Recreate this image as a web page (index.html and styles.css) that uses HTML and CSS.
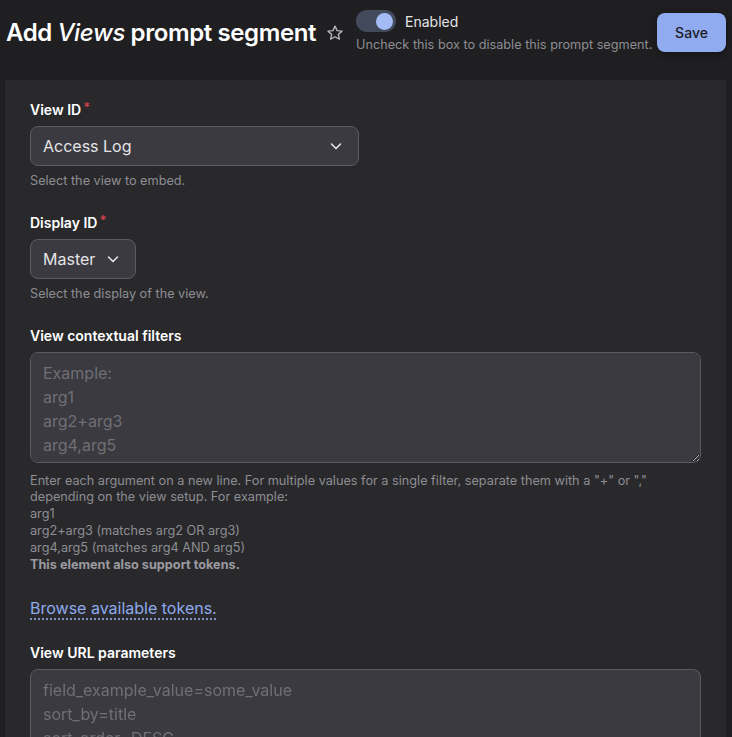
FILE: index.html
```html
<!DOCTYPE html>
<html lang="en">
<head>
  <meta charset="UTF-8">
  <meta name="viewport" content="width=device-width, initial-scale=1.0">
  <title>Add Views prompt segment</title>
  <link rel="stylesheet" href="styles.css">
</head>
<body>
  <div class="page-header">
    <h1 class="page-title">Add <em>Views</em> prompt segment</h1>
    <span class="star" title="Add to shortcuts">
      <svg width="18" height="18" viewBox="0 0 24 24" fill="none" stroke="#b8b8bc" stroke-width="1.8" stroke-linejoin="round">
        <path d="M12 2.8l2.8 6 6.5.7-4.9 4.4 1.4 6.4L12 17l-5.8 3.3 1.4-6.4-4.9-4.4 6.5-.7z"/>
      </svg>
    </span>
    <div class="status">
      <label class="toggle">
        <span class="switch"><span class="knob"></span></span>
        <span class="toggle-label">Enabled</span>
      </label>
      <div class="status-desc">Uncheck this box to disable this prompt segment.</div>
    </div>
    <button class="save">Save</button>
  </div>

  <div class="panel">
    <div class="field">
      <label class="field-label">View ID<span class="req">*</span></label>
      <div class="select wide">
        <span>Access Log</span>
        <svg class="chev" width="14" height="14" viewBox="0 0 14 14" fill="none" stroke="#e4e4e7" stroke-width="1.6" stroke-linecap="round" stroke-linejoin="round"><path d="M2.5 5l4.5 4.5L11.5 5"/></svg>
      </div>
      <div class="desc">Select the view to embed.</div>
    </div>

    <div class="field">
      <label class="field-label">Display ID<span class="req">*</span></label>
      <div class="select">
        <span>Master</span>
        <svg class="chev" width="14" height="14" viewBox="0 0 14 14" fill="none" stroke="#e4e4e7" stroke-width="1.6" stroke-linecap="round" stroke-linejoin="round"><path d="M2.5 5l4.5 4.5L11.5 5"/></svg>
      </div>
      <div class="desc">Select the display of the view.</div>
    </div>

    <div class="field">
      <label class="field-label">View contextual filters</label>
      <textarea class="textarea" rows="4" placeholder="Example:&#10;arg1&#10;arg2+arg3&#10;arg4,arg5"></textarea>
      <div class="desc desc-long">
        Enter each argument on a new line. For multiple values for a single filter, separate them with a "+" or ","
        depending on the view setup. For example:<br>
        arg1<br>
        arg2+arg3 (matches arg2 OR arg3)<br>
        arg4,arg5 (matches arg4 AND arg5)<br>
        <strong>This element also support tokens.</strong>
      </div>
      <a class="tokens" href="#">Browse available tokens.</a>
    </div>

    <div class="field">
      <label class="field-label">View URL parameters</label>
      <textarea class="textarea" rows="4" placeholder="field_example_value=some_value&#10;sort_by=title&#10;sort_order=DESC"></textarea>
    </div>
  </div>
</body>
</html>
```

FILE: styles.css
```css
/* Base */
body {
  margin: 0;
  padding: 0 6px 0 5px;
  background: #1f1f21;
  color: #e4e4e7;
  font-family: 'Inter', 'Noto Sans', sans-serif;
  overflow: hidden;
}

/* Header */
.page-header {
  display: flex;
  align-items: flex-start;
  height: 80px;
}
.page-title {
  margin: 17px 0 0 1px;
  font-size: 24px;
  font-weight: 600;
  letter-spacing: -0.4px;
  color: #fff;
  line-height: 32px;
}
.page-title em {
  font-weight: 500;
}
.star {
  margin: 24px 0 0 10px;
  display: flex;
}
.status {
  margin: 10px 0 0 12px;
}
.toggle {
  display: flex;
  align-items: center;
  gap: 9px;
}
.switch {
  width: 40px;
  height: 22px;
  border-radius: 11px;
  background: #434a5b;
  display: flex;
  align-items: center;
  justify-content: flex-end;
  padding: 0 3px;
  box-sizing: border-box;
}
.knob {
  width: 17px;
  height: 17px;
  border-radius: 50%;
  background: #a4bcf6;
}
.toggle-label {
  font-size: 14px;
  color: #e4e4e7;
}
.status-desc {
  margin-top: 5px;
  font-size: 12.7px;
  color: #8d8d93;
}
.save {
  margin: 13px 0 0 auto;
  width: 69px;
  height: 39px;
  border: none;
  border-radius: 8px;
  background: #91abf0;
  color: #1b1b1f;
  font-family: inherit;
  font-size: 14px;
  font-weight: 500;
  box-shadow: 0 2px 8px rgba(0, 0, 0, 0.4);
}

/* Panel */
.panel {
  background: #29292c;
  padding: 20px 25px 0;
  min-height: 700px;
}
.field {
  margin-bottom: 23px;
}
.field-label {
  display: block;
  font-size: 14px;
  font-weight: 600;
  color: #fff;
  margin-bottom: 6px;
  line-height: 20px;
}
.req {
  color: #d0424c;
  font-size: 13px;
  vertical-align: top;
  margin-left: 2px;
  line-height: 14px;
}
.select {
  display: inline-flex;
  align-items: center;
  justify-content: space-between;
  box-sizing: border-box;
  height: 40px;
  padding: 0 15px 0 12px;
  gap: 11px;
  border: 1px solid #5b5b61;
  border-radius: 8px;
  background: #3b3a40;
  font-size: 16px;
  color: #e4e4e7;
  vertical-align: top;
}
.select.wide {
  width: 329px;
}
.desc {
  margin-top: 7px;
  font-size: 12.7px;
  line-height: 16.8px;
  color: #8d8d93;
}
.desc-long {
  margin-top: 10px;
}
.desc strong {
  font-weight: 700;
  color: #9a9aa0;
}
.textarea {
  display: block;
  width: 100%;
  box-sizing: border-box;
  height: 111px;
  margin: 0;
  padding: 8px 12px;
  border: 1px solid #5b5b61;
  border-radius: 8px;
  background: #3b3a40;
  color: #e4e4e7;
  font-family: inherit;
  font-size: 16px;
  line-height: 24px;
  resize: vertical;
}
.textarea::placeholder {
  color: #6f6f75;
}
.tokens {
  display: inline-block;
  margin: 23px 0 0;
  font-size: 16px;
  line-height: 24px;
  color: #8eaaeb;
  text-decoration: underline dotted;
  text-decoration-color: #8eaaeb;
  text-underline-offset: 4px;
}
```
